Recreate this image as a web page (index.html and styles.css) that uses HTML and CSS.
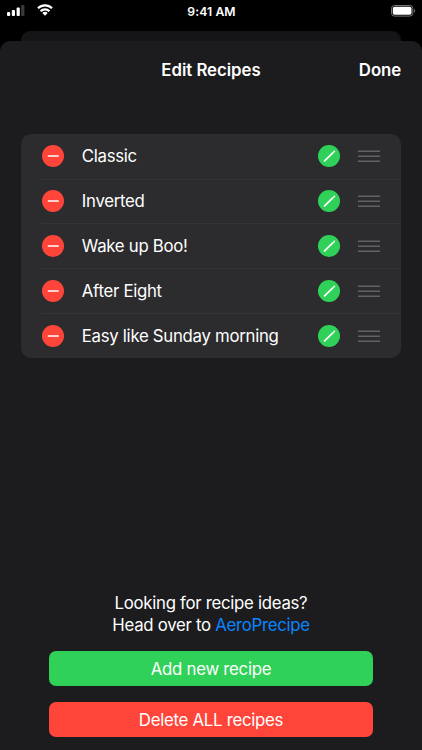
FILE: index.html
```html
<!DOCTYPE html>
<html lang="en">

<head>
    <meta charset="UTF-8">
    <meta name="viewport" content="width=device-width, initial-scale=1.0">
    <title>Edit Recipes</title>
    <link rel="stylesheet" href="styles.css">
</head>

<body>
    <svg class="icon_defs" width="0" height="0">
        <symbol id="icon_delete" viewBox="0 0 22 22">
            <circle cx="11" cy="11" r="11" fill="#ff453a" />
            <path d="M6.5 11h9.6" stroke="#fff" stroke-width="1.7" stroke-linecap="round" />
        </symbol>
        <symbol id="icon_edit" viewBox="0 0 22 22">
            <circle cx="11" cy="11" r="11" fill="#30d158" />
            <path d="M6.6 15.8l8.2-7.9M16.2 6.5l.1-.1" stroke="#fff" stroke-width="1.8" stroke-linecap="round" />
        </symbol>
        <symbol id="icon_drag" viewBox="0 0 22 12">
            <path d="M0 1.2h22M0 6.2h22M0 11.2h22" stroke="#626266" stroke-width="1.4" />
        </symbol>
    </svg>

    <div class="status_bar">
        <div class="status_left">
            <svg class="signal" width="18" height="12" viewBox="0 0 18 12">
                <rect x="0" y="8" width="3.2" height="4" rx="1" fill="#fff" />
                <rect x="4.8" y="6" width="3.2" height="6" rx="1" fill="#fff" />
                <rect x="9.6" y="3.5" width="3.2" height="8.5" rx="1" fill="#fff" />
                <rect x="14.2" y="1" width="3.2" height="11" rx="1" fill="#3a3a3a" />
            </svg>
            <svg class="wifi" width="16" height="12" viewBox="0 0 16 12">
                <path d="M1 4.3a10 10 0 0 1 14 0M3.6 7.2a6.2 6.2 0 0 1 8.8 0" fill="none" stroke="#fff" stroke-width="2.2" />
                <path d="M8 11.8L5.3 9.1a3.8 3.8 0 0 1 5.4 0z" fill="#fff" />
            </svg>
        </div>
        <span class="time">9:41 AM</span>
        <svg class="battery" width="25" height="12" viewBox="0 0 25 12">
            <rect x=".5" y=".5" width="21.3" height="10.6" rx="3" fill="none" stroke="#777" />
            <rect x="1.8" y="1.8" width="18.7" height="8" rx="1.8" fill="#fff" />
            <path d="M23 4v3.8c1.5-.6 1.5-3.2 0-3.8z" fill="#777" />
        </svg>
    </div>

    <div class="back_sheet"></div>

    <div class="sheet">
        <header>
            <h1>Edit Recipes</h1>
            <a class="done">Done</a>
        </header>

        <ul class="recipes">
            <li>
                <svg class="icon"><use href="#icon_delete" /></svg>
                <div class="row">
                    <span class="name">Classic</span>
                    <svg class="icon"><use href="#icon_edit" /></svg>
                    <svg class="drag"><use href="#icon_drag" /></svg>
                </div>
            </li>
            <li>
                <svg class="icon"><use href="#icon_delete" /></svg>
                <div class="row">
                    <span class="name">Inverted</span>
                    <svg class="icon"><use href="#icon_edit" /></svg>
                    <svg class="drag"><use href="#icon_drag" /></svg>
                </div>
            </li>
            <li>
                <svg class="icon"><use href="#icon_delete" /></svg>
                <div class="row">
                    <span class="name">Wake up Boo!</span>
                    <svg class="icon"><use href="#icon_edit" /></svg>
                    <svg class="drag"><use href="#icon_drag" /></svg>
                </div>
            </li>
            <li>
                <svg class="icon"><use href="#icon_delete" /></svg>
                <div class="row">
                    <span class="name">After Eight</span>
                    <svg class="icon"><use href="#icon_edit" /></svg>
                    <svg class="drag"><use href="#icon_drag" /></svg>
                </div>
            </li>
            <li>
                <svg class="icon"><use href="#icon_delete" /></svg>
                <div class="row">
                    <span class="name">Easy like Sunday morning</span>
                    <svg class="icon"><use href="#icon_edit" /></svg>
                    <svg class="drag"><use href="#icon_drag" /></svg>
                </div>
            </li>
        </ul>

        <footer>
            <p>Looking for recipe ideas?</p>
            <p>Head over to <a class="link">AeroPrecipe</a></p>
            <button class="btn add">Add new recipe</button>
            <button class="btn delete">Delete ALL recipes</button>
        </footer>
    </div>
</body>

</html>
```
FILE: styles.css
```css
* {
    margin: 0;
    padding: 0;
    box-sizing: border-box;
}

body {
    display: flex;
    flex-direction: column;
    height: 750px;
    overflow: hidden;

    background: #000;
    color: #fff;
    font-family: Inter, "Liberation Sans", sans-serif;
    font-size: 16.8px;
    letter-spacing: -0.29px;
}

.icon_defs {
    display: none;
}

.status_bar {
    display: grid;
    grid-template-columns: 1fr auto 1fr;
    height: 31px;
    padding: 4px 6px 0 7px;
}

.status_left {
    display: flex;
    gap: 12px;
}

.time {
    font-size: 12.2px;
    font-weight: 600;
    line-height: 15px;
    letter-spacing: 0.1px;
}

.battery {
    justify-self: end;
    margin-top: 1px;
}

.back_sheet {
    height: 10px;
    margin: 0 21px;
    border-radius: 9px 9px 0 0;
    background: #151517;
}

.sheet {
    flex: 1;
    display: flex;
    flex-direction: column;
    border-radius: 10px 10px 0 0;
    background: #1c1c1e;
}

header {
    display: grid;
    grid-template-columns: 1fr auto 1fr;
    align-items: center;
    height: 57px;
    padding: 0 21px;
}

h1 {
    grid-column: 2;
    font-size: 16.8px;
    font-weight: 600;
    letter-spacing: -0.03px;
}

.done {
    justify-self: end;
    font-weight: 600;
    letter-spacing: -0.1px;
}

.recipes {
    margin: 35.8px 20.7px 0;
    border-radius: 10px;
    background: #2c2c2e;
    list-style: none;
}

li {
    display: flex;
    align-items: center;
    height: 44.75px;
    margin-left: 20px;
    padding-left: 1.5px;
}

li + li {
    border-top: 1px solid #353538;
}

.icon {
    flex: none;
    width: 22px;
    height: 22px;
}

.row {
    flex: 1;
    display: flex;
    align-items: center;
    padding: 0 21.3px 0 17.6px;
}

.name {
    flex: 1;
    line-height: 22px;
    white-space: nowrap;
}

.drag {
    width: 22px;
    height: 12px;
    margin-left: 18px;
}

footer {
    margin-top: auto;
    padding: 0 49px 13px;
    text-align: center;
}

footer p {
    line-height: 22px;
}

.link {
    color: #0a84ff;
}

.btn {
    display: block;
    width: 100%;
    height: 35px;
    border: none;
    border-radius: 7px;

    color: #fff;
    font-family: inherit;
    font-size: 16.8px;
    letter-spacing: -0.27px;
}

.add {
    margin-top: 15px;
    background: #30d158;
}

.delete {
    margin-top: 16px;
    padding-top: 1px;
    background: #ff453a;
}
```
